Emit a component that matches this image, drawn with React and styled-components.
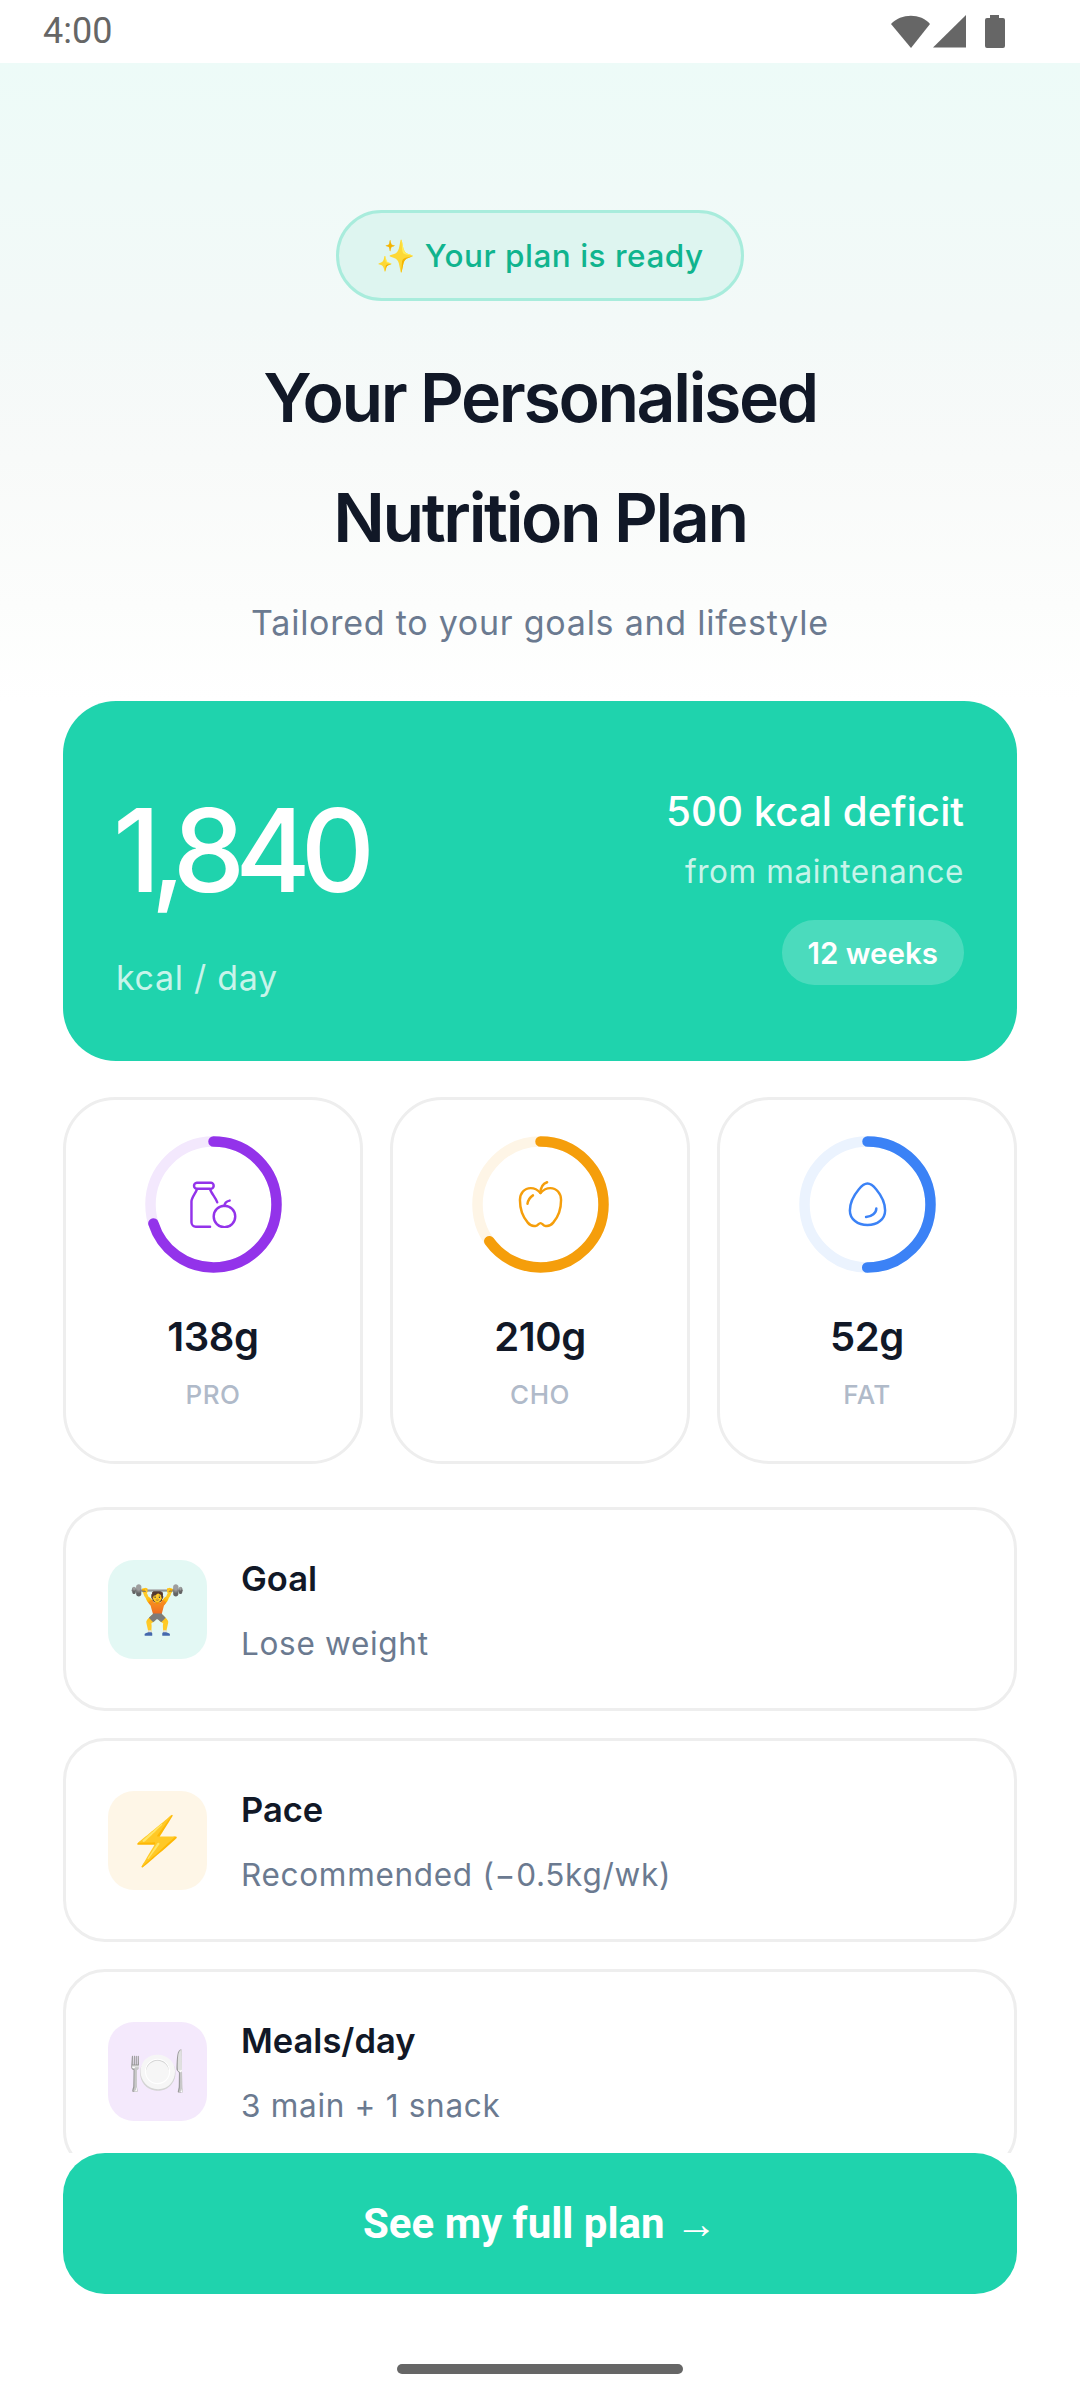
import React from "react";
import styled, { createGlobalStyle } from "styled-components";

const Global = createGlobalStyle`
  html, body { margin: 0; padding: 0; background: #fff; }
  * { box-sizing: border-box; }
  body { font-family: Inter, "Noto Sans", sans-serif; }
`;

const Screen = styled.div`
  width: 1080px; height: 2400px; display: flex; flex-direction: column; background: #fff; overflow: hidden;
`;
const StatusBar = styled.div`
  height: 63px; flex: none; display: flex; align-items: center; justify-content: space-between;
  padding: 0 69px 0 43px; background: #fff;
`;
const Clock = styled.span`
  font-family: Roboto, sans-serif; font-size: 36px; color: #666; line-height: 63px;
`;
const StatusIcons = styled.svg`
  width: 120px; height: 36px; display: block; fill: #666;
`;
const Scroll = styled.div`
  flex: 1; min-height: 0; overflow: hidden; display: flex; flex-direction: column;
`;
const Hero = styled.header`
  height: 638px; flex: none; display: flex; flex-direction: column; align-items: center;
  padding-top: 147px;
  background: linear-gradient(180deg, #edfbf8 0%, #f3f9f8 40%, #f8faf9 62%, #fcfdfc 85%, #ffffff 100%);
`;
const ReadyPill = styled.div`
  width: 408px; height: 91px; border: 3px solid #a8ecdc; border-radius: 46px; background: #def5f0;
  display: flex; align-items: center; justify-content: center;
  font-size: 31.5px; font-weight: 500; color: #10b48e; letter-spacing: 0.5px;
`;
const Title = styled.h1`
  margin: 36px 0 0; font-size: 68px; line-height: 120px; font-weight: 580; color: #111827;
  letter-spacing: -2.4px; text-align: center;
`;
const Subtitle = styled.p`
  margin: 23px 0 0; font-size: 34px; line-height: 46px; color: #6b7a90; letter-spacing: 0.75px;
`;
const Content = styled.div`
  display: flex; flex-direction: column; padding: 0 63px;
`;
const KcalCard = styled.section`
  height: 360px; border-radius: 53px; background: #1fd3ad; color: #fff; padding: 0 53px;
  display: flex; justify-content: space-between; align-items: stretch;
`;
const KcalLeft = styled.div`
  display: flex; flex-direction: column; padding-top: 85px;
`;
const KcalValue = styled.div`
  font-size: 115px; line-height: 130px; font-weight: 550; letter-spacing: -10px; margin-left: -3px;
`;
const KcalUnit = styled.div`
  margin-top: 39px; font-size: 34px; line-height: 46px; color: rgba(255,255,255,.75); letter-spacing: 0.7px;
`;
const KcalRight = styled.div`
  display: flex; flex-direction: column; align-items: flex-end; padding-top: 87px;
`;
const Deficit = styled.div`
  font-size: 40.3px; line-height: 48px; font-weight: 500;
`;
const Maintenance = styled.div`
  margin-top: 14px; font-size: 31.5px; line-height: 44px; color: rgba(255,255,255,.75); letter-spacing: 0.6px;
`;
const WeeksPill = styled.div`
  margin-top: 26px; height: 65px; padding: 0 26px; border-radius: 33px; background: rgba(255,255,255,.2);
  display: flex; align-items: center; font-size: 29.5px; font-weight: 600;
`;
const MacroGrid = styled.div`
  margin-top: 36px; display: grid; grid-template-columns: repeat(3, 300px); justify-content: space-between;
`;
const MacroCard = styled.div`
  height: 367px; border: 3px solid #eeeeee; border-radius: 52px; background: #fff;
  display: flex; flex-direction: column; align-items: center; padding-top: 36px;
`;
const RingWrap = styled.div`
  position: relative; width: 137px; height: 137px;
`;
const RingSvg = styled.svg`
  display: block; width: 137px; height: 137px; transform: rotate(-90deg);
`;
const RingIcon = styled.div`
  position: absolute; inset: 0; display: flex; align-items: center; justify-content: center; color: ${p => p.$color};
`;
const IconSvg = styled.svg`
  display: block; width: 47px; height: 47px; fill: none; stroke: currentColor; stroke-width: 2.5;
  stroke-linecap: round; stroke-linejoin: round;
`;
const MacroValue = styled.div`
  margin-top: 38px; font-size: 40px; line-height: 52px; font-weight: 580; color: #111827; letter-spacing: -0.4px;
`;
const MacroLabel = styled.div`
  margin-top: 14px; font-size: 26px; line-height: 36px; font-weight: 500; color: #b0bac9; letter-spacing: 0.5px;
`;
const Rows = styled.div`
  margin-top: 43px; display: flex; flex-direction: column; gap: 27px;
`;
const InfoRow = styled.div`
  height: 204px; flex: none; border: 3px solid #eeeeee; border-radius: 42px; background: #fff;
  display: flex; align-items: center; gap: 34px; padding: 0 42px;
`;
const EmojiBox = styled.div`
  width: 99px; height: 99px; border-radius: 26px; flex: none; background: ${p => p.$bg};
  display: flex; align-items: center; justify-content: center; font-size: 47px; line-height: 1;
  font-family: "Noto Color Emoji", sans-serif;
`;
const RowText = styled.div`
  display: flex; flex-direction: column; gap: 20px; padding-top: 3px;
`;
const RowTitle = styled.div`
  font-size: 34.5px; line-height: 46px; font-weight: 560; color: #111827;
`;
const RowSub = styled.div`
  font-size: 31.5px; line-height: 44px; color: #6b7a90; letter-spacing: 0.7px;
`;
const Footer = styled.footer`
  flex: none; height: 247px; padding: 0 63px; background: #fff; display: flex; flex-direction: column; align-items: center;
`;
const Cta = styled.button`
  width: 954px; height: 141px; border: 0; border-radius: 42px; background: #1fd3ad; color: #fff;
  font-family: Roboto, sans-serif; font-size: 42px; font-weight: 700; display: block;
`;
const CtaArrow = styled.span`
  font-weight: 400;
`;
const HomeBar = styled.div`
  margin-top: 70px; width: 286px; height: 10px; border-radius: 5px; background: #666;
`;

function Ring({ color, track, pct, children }) {
  const r = 63;
  const c = 2 * Math.PI * r;
  return (
    <RingWrap>
      <RingSvg viewBox="0 0 137 137">
        <circle cx="68.5" cy="68.5" r={r} fill="none" stroke={track} strokeWidth="10.5" />
        <circle cx="68.5" cy="68.5" r={r} fill="none" stroke={color} strokeWidth="10.5" strokeLinecap="round"
          strokeDasharray={`${c * pct} ${c}`} />
      </RingSvg>
      <RingIcon $color={color}>{children}</RingIcon>
    </RingWrap>
  );
}

const Bottle = () => (
  <IconSvg viewBox="0 0 48 48">
    <path d="M20.5 46.7H6a4.5 4.5 0 0 1-4.5-4.5V21c0-4 4-8 5.7-12.7" />
    <path d="M7.5 8H20.5a3 3 0 0 0 1-6.3H7a3 3 0 0 0 .5 6.3z" />
    <path d="M20.5 8.3c1 4 6 9 7.3 13.4" />
    <circle cx="35.2" cy="36.2" r="11" />
    <path d="M35.2 25.5c0-2.8 2.2-4.8 5.3-5.5" />
  </IconSvg>
);
const AppleIcon = () => (
  <IconSvg viewBox="0 0 48 48">
    <path d="M24 12.3C21 9 17 7.3 14 7.3 7.5 7.3 3 12.5 3 19.5c0 9 3.5 18 8 23 2.5 3 6 4 9 3 1.500-.6 2.500-2.500 4-2.500s2.500 1.900 4 2.500c3 1 6.500 0 9-3 4.500-5 8-14 8-23C45 12.500 40.500 7.300 34 7.300c-3 0-7 1.700-10 5z" />
    <path d="M24 12.3c0-5 2.500-9.500 6.700-11" />
    <path d="M16.300 14.700c-2.800 1.700-5 5-5.600 8.600" />
  </IconSvg>
);
const Drop = () => (
  <IconSvg viewBox="0 0 48 48">
    <path d="M24 2.600c3 0 6 2.400 9 6 5 6 9 14 9 21.400C42 39 34 45 24 45S6 39 6 30c0-7.400 4-15.400 9-21.400 3-3.600 6-6 9-6z" />
    <path d="M33 28c0 4.500-4.500 8.500-10.500 8.700" />
  </IconSvg>
);

export default function App() {
  return (
    <Screen>
      <Global />
      <StatusBar>
        <Clock>4:00</Clock>
        <StatusIcons viewBox="0 0 120 36">
          <path d="M0 10 C10 -1 30 -1 39 10 L20 34 Z" />
          <path d="M75 1 V33.500 H42 Z" />
          <path d="M94 6 a2 2 0 0 1 2-2 h3 V1 h9 v3 h4 a2 2 0 0 1 2 2 v26 a2 2 0 0 1-2 2 H96 a2 2 0 0 1-2-2 z" />
        </StatusIcons>
      </StatusBar>
      <Scroll>
        <Hero>
          <ReadyPill>✨ Your plan is ready</ReadyPill>
          <Title>Your Personalised<br />Nutrition Plan</Title>
          <Subtitle>Tailored to your goals and lifestyle</Subtitle>
        </Hero>
        <Content>
          <KcalCard>
            <KcalLeft>
              <KcalValue>1,840</KcalValue>
              <KcalUnit>kcal / day</KcalUnit>
            </KcalLeft>
            <KcalRight>
              <Deficit>500 kcal deficit</Deficit>
              <Maintenance>from maintenance</Maintenance>
              <WeeksPill>12 weeks</WeeksPill>
            </KcalRight>
          </KcalCard>
          <MacroGrid>
            <MacroCard>
              <Ring color="#9333ea" track="#f3e8fd" pct={0.7}><Bottle /></Ring>
              <MacroValue>138g</MacroValue>
              <MacroLabel>PRO</MacroLabel>
            </MacroCard>
            <MacroCard>
              <Ring color="#f59e0b" track="#fef5e6" pct={0.65}><AppleIcon /></Ring>
              <MacroValue>210g</MacroValue>
              <MacroLabel>CHO</MacroLabel>
            </MacroCard>
            <MacroCard>
              <Ring color="#3b82f6" track="#ebf3fe" pct={0.5}><Drop /></Ring>
              <MacroValue>52g</MacroValue>
              <MacroLabel>FAT</MacroLabel>
            </MacroCard>
          </MacroGrid>
          <Rows>
            <InfoRow>
              <EmojiBox $bg="#e3f8f4">🏋️</EmojiBox>
              <RowText><RowTitle>Goal</RowTitle><RowSub>Lose weight</RowSub></RowText>
            </InfoRow>
            <InfoRow>
              <EmojiBox $bg="#fef6e7">⚡</EmojiBox>
              <RowText><RowTitle>Pace</RowTitle><RowSub>Recommended (−0.5kg/wk)</RowSub></RowText>
            </InfoRow>
            <InfoRow>
              <EmojiBox $bg="#f4e9fc">🍽️</EmojiBox>
              <RowText><RowTitle>Meals/day</RowTitle><RowSub>3 main + 1 snack</RowSub></RowText>
            </InfoRow>
          </Rows>
        </Content>
      </Scroll>
      <Footer>
        <Cta>See my full plan <CtaArrow>→</CtaArrow></Cta>
        <HomeBar />
      </Footer>
    </Screen>
  );
}
